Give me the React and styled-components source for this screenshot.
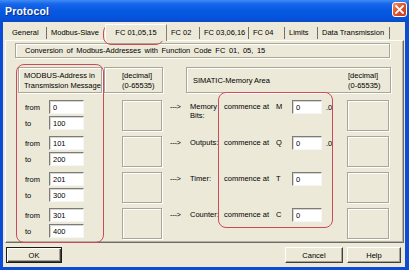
import React from 'react';
import styled, { createGlobalStyle, css } from 'styled-components';

const GlobalStyle = createGlobalStyle`
  html, body {
    margin: 0;
    padding: 0;
    background: #ffffff;
  }
  body {
    font-family: "Liberation Sans", Arial, sans-serif;
    font-size: 7.5px;
    color: #000;
  }
`;

const Window = styled.div`
  position: relative;
  width: 409px;
  height: 270px;
  display: flex;
  flex-direction: column;
  overflow: hidden;
`;

const TitleBar = styled.div`
  flex: none;
  height: 22px;
  display: flex;
  align-items: flex-start;
  justify-content: space-between;
  padding: 0 3px 0 5px;
  background: linear-gradient(#3f8cf6 0%, #1766ea 18%, #075ae2 45%, #0553dc 80%, #0a49c8 100%);
`;

const Title = styled.span`
  margin-top: 5px;
  font-size: 10.5px;
  font-weight: bold;
  color: #fff;
  text-shadow: 1px 1px 0 #0b2d8c;
  letter-spacing: 0.2px;
`;

const CloseButton = styled.div`
  margin-top: 2px;
  margin-right: -1px;
  width: 15px;
  height: 15px;
  box-sizing: border-box;
  border: 1px solid #fff;
  border-radius: 3px;
  background: linear-gradient(135deg, #f0926f 0%, #e1542c 45%, #c9381a 100%);
  display: flex;
  align-items: center;
  justify-content: center;
`;

const Frame = styled.div`
  flex: 1;
  display: flex;
  flex-direction: column;
  background: #ece9d8;
  border: solid #0b4bd6;
  border-width: 0 4px 3px 3px;
`;

const TabStrip = styled.div`
  flex: none;
  height: 18px;
  display: flex;
  align-items: flex-end;
  padding-left: 5px;
  position: relative;
  z-index: 1;
`;

const Tab = styled.div`
  box-sizing: border-box;
  width: ${p => p.$w}px;
  height: 12px;
  line-height: 11px;
  margin-bottom: 1px;
  padding-left: 4px;
  white-space: nowrap;
  border-right: ${p => (p.$noSep ? 'none' : '1px solid #6f6f6f')};
  ${p =>
    p.$active &&
    css`
      height: 17px;
      line-height: 15px;
      margin-bottom: -1px;
      padding: 0;
      text-align: center;
      background: #ece9d8;
      border-top: 1px solid #fff;
      border-left: 1px solid #fff;
      border-right: 1px solid #808080;
    `}
`;

const Panel = styled.div`
  flex: none;
  box-sizing: border-box;
  height: 203px;
  margin: 0 1px 0 2px;
  padding: 2px 0 0 9px;
  border: 1px solid #fdfdfb;
  border-right-color: #6b6b6b;
  border-bottom-color: #6b6b6b;
  box-shadow: inset -1px -1px 0 #b4b1a2;
  display: flex;
  flex-direction: column;
`;

const etched = css`
  box-sizing: border-box;
  border: 1px solid #a9a697;
  box-shadow: inset 1px 1px 0 #fff, 1px 1px 0 #fff;
`;

const Caption = styled.div`
  ${etched};
  width: 375px;
  height: 15px;
  line-height: 13px;
  padding-left: 9px;
  word-spacing: 1.5px;
`;

const Grid = styled.div`
  margin: 9px 0 0 3px;
  display: grid;
  grid-template-columns: 86px 58px 24px 205px;
  grid-template-rows: 28px repeat(4, 31px);
  row-gap: 5px;
`;

const HeadBox = styled.div`
  ${etched};
  align-self: start;
  width: ${p => p.$w}px;
  height: 26px;
  padding: 3px 0 0 ${p => p.$pad}px;
  line-height: 10px;
  white-space: pre;
  display: flex;
  justify-content: space-between;
`;

const HeadRight = styled.span`
  width: 42px;
`;

const HeadLeft = styled.span`
  margin-top: 5px;
`;

const RangeCell = styled.div`
  display: flex;
  flex-direction: column;
  gap: 2px;
`;

const FieldRow = styled.div`
  display: flex;
  align-items: center;
  height: 14px;
`;

const FieldLabel = styled.span`
  box-sizing: border-box;
  width: 31px;
  padding-left: 7px;
`;

const Field = styled.input`
  box-sizing: border-box;
  width: ${p => p.$w}px;
  height: 14px;
  margin: 0;
  padding: 0 0 0 3px;
  font: 7.5px "Liberation Sans", Arial, sans-serif;
  color: #000;
  background: #fff;
  border: 1px solid;
  border-color: #7b7b7b #f6f6f6 #f6f6f6 #7b7b7b;
  box-shadow: inset 1px 1px 0 #d8d6cc;
  outline: none;
`;

const EmptyBox = styled.div`
  ${etched};
  justify-self: end;
  width: ${p => p.$w}px;
  height: 31px;
`;

const Arrow = styled.div`
  padding-left: 8px;
  line-height: 14px;
  letter-spacing: -0.3px;
`;

const TargetRow = styled.div`
  display: flex;
  align-items: flex-start;
  padding-left: 4px;
`;

const AreaLabel = styled.span`
  width: 34px;
  padding-top: 1.5px;
  line-height: 9px;
  white-space: pre;
`;

const Commence = styled.span`
  width: 52px;
  line-height: 14px;
`;

const AreaLetter = styled.span`
  width: 16px;
  line-height: 14px;
`;

const Suffix = styled.span`
  width: 25px;
  padding-left: 4px;
  box-sizing: border-box;
  line-height: 15px;
`;

const ButtonRow = styled.div`
  flex: 1;
  display: flex;
  align-items: flex-start;
  padding: 4px 4px 0 3px;
  gap: 4px;
`;

const Spacer = styled.div`
  flex: 1;
`;

const Button = styled.button`
  box-sizing: border-box;
  width: ${p => p.$w}px;
  height: 16px;
  margin: 0;
  padding: 0;
  font: 7.5px "Liberation Sans", Arial, sans-serif;
  color: #000;
  background: #ece9d8;
  border: 1px solid;
  border-color: #fff #404040 #404040 #fff;
  box-shadow: inset -1px -1px 0 #a6a393;
  ${p =>
    p.$default &&
    css`
      border: 1px solid #1a1a1a;
      box-shadow: inset 1px 1px 0 #fff, inset -1px -1px 0 #404040, inset -2px -2px 0 #a6a393;
    `}
`;

const Mark = styled.div`
  position: absolute;
  left: ${p => p.$x}px;
  top: ${p => p.$y}px;
  width: ${p => p.$w}px;
  height: ${p => p.$h}px;
  box-sizing: border-box;
  border: 1.5px solid #cf4a59;
  border-radius: 8px;
  pointer-events: none;
`;

const tabs = [
  { label: 'General', w: 39 },
  { label: 'Modbus-Slave', w: 58, noSep: true },
  { label: 'FC 01,05,15', w: 62, active: true },
  { label: 'FC 02', w: 33 },
  { label: 'FC 03,06,16', w: 49 },
  { label: 'FC 04', w: 36 },
  { label: 'Limits', w: 33 },
  { label: 'Data Transmission', w: 72 },
];

const groups = [
  { from: '0', to: '100', area: 'Memory\nBits:', letter: 'M', bit: true },
  { from: '101', to: '200', area: 'Outputs:', letter: 'Q', bit: true },
  { from: '201', to: '300', area: 'Timer:', letter: 'T' },
  { from: '301', to: '400', area: 'Counter:', letter: 'C' },
];

export default function App() {
  return (
    <Window>
      <GlobalStyle />
      <TitleBar>
        <Title>Protocol</Title>
        <CloseButton>
          <svg width="9" height="9" viewBox="0 0 9 9">
            <path d="M1 1 L8 8 M8 1 L1 8" stroke="#fff" strokeWidth="1.8" strokeLinecap="square" />
          </svg>
        </CloseButton>
      </TitleBar>
      <Frame>
        <TabStrip>
          {tabs.map(t => (
            <Tab key={t.label} $w={t.w} $active={t.active} $noSep={t.noSep}>
              {t.label}
            </Tab>
          ))}
        </TabStrip>
        <Panel>
          <Caption>Conversion of Modbus-Addresses with Function Code FC 01, 05, 15</Caption>
          <Grid>
            <HeadBox $w={84} $pad={5}>{'MODBUS-Address in\nTransmission Message'}</HeadBox>
            <HeadBox $w={59} $pad={17}>{'[decimal]\n(0-65535)'}</HeadBox>
            <div />
            <HeadBox $w={205} $pad={6}>
              <HeadLeft>SIMATIC-Memory Area</HeadLeft>
              <HeadRight>{'[decimal]\n(0-65535)'}</HeadRight>
            </HeadBox>
            {groups.map(g => (
              <React.Fragment key={g.from}>
                <RangeCell>
                  <FieldRow>
                    <FieldLabel>from</FieldLabel>
                    <Field $w={35} defaultValue={g.from} readOnly />
                  </FieldRow>
                  <FieldRow>
                    <FieldLabel>to</FieldLabel>
                    <Field $w={35} defaultValue={g.to} readOnly />
                  </FieldRow>
                </RangeCell>
                <EmptyBox $w={40} />
                <Arrow>---&gt;</Arrow>
                <TargetRow>
                  <AreaLabel>{g.area}</AreaLabel>
                  <Commence>commence at</Commence>
                  <AreaLetter>{g.letter}</AreaLetter>
                  <Field $w={30} defaultValue="0" readOnly />
                  <Suffix>{g.bit ? '.0' : ''}</Suffix>
                  <EmptyBox $w={42} />
                </TargetRow>
              </React.Fragment>
            ))}
          </Grid>
        </Panel>
        <ButtonRow>
          <Button $w={56} $default>OK</Button>
          <Spacer />
          <Button $w={58}>Cancel</Button>
          <Button $w={54}>Help</Button>
        </ButtonRow>
      </Frame>
      <Mark $x={103} $y={24} $w={61} $h={21} />
      <Mark $x={16} $y={64} $w={88} $h={179} />
      <Mark $x={218} $y={92} $w={115} $h={136} />
    </Window>
  );
}
